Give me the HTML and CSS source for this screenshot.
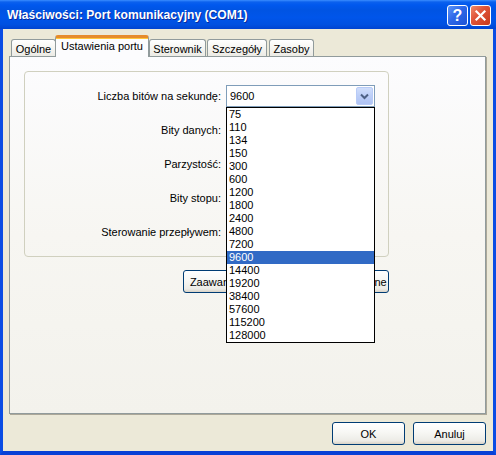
FILE: index.html
```html
<!DOCTYPE html>
<html lang="pl">
<head>
<meta charset="utf-8">
<title>Właściwości: Port komunikacyjny (COM1)</title>
<link rel="stylesheet" href="styles.css">
</head>
<body>
<div class="window">
  <div class="titlebar">
    <span class="title">Właściwości: Port komunikacyjny (COM1)</span>
    <div class="caption-buttons">
      <span class="cbtn help">?</span>
      <span class="cbtn close">
        <svg width="13" height="13" viewBox="0 0 13 13"><path d="M2.5 2.5 L10.5 10.5 M10.5 2.5 L2.5 10.5" stroke="#fff" stroke-width="2.2" stroke-linecap="square"/></svg>
      </span>
    </div>
  </div>
  <div class="client">
    <div class="tabs">
      <div class="tab t-ogolne">Ogólne</div>
      <div class="tab selected t-ustawienia">Ustawienia portu</div>
      <div class="tab t-sterownik">Sterownik</div>
      <div class="tab t-szczegoly">Szczegóły</div>
      <div class="tab t-zasoby">Zasoby</div>
    </div>
    <div class="panel">
      <div class="group">
        <div class="label">Liczba bitów na sekundę:</div>
        <div class="combo-cell">
          <div class="combo">
            <span class="combo-value">9600</span>
            <span class="drop-btn"><svg width="9" height="7" viewBox="0 0 9 7"><path d="M1 1.5 L4.5 5 L8 1.5" fill="none" stroke="#4D6185" stroke-width="2"/></svg></span>
          </div>
          <ul class="droplist">
            <li>75</li><li>110</li><li>134</li><li>150</li><li>300</li><li>600</li>
            <li>1200</li><li>1800</li><li>2400</li><li>4800</li><li>7200</li>
            <li class="hl">9600</li><li>14400</li><li>19200</li><li>38400</li>
            <li>57600</li><li>115200</li><li>128000</li>
          </ul>
        </div>
        <div class="label">Bity danych:</div>
        <div class="combo-cell"><div class="combo"><span class="combo-value"></span><span class="drop-btn"></span></div></div>
        <div class="label">Parzystość:</div>
        <div class="combo-cell"><div class="combo"><span class="combo-value"></span><span class="drop-btn"></span></div></div>
        <div class="label">Bity stopu:</div>
        <div class="combo-cell"><div class="combo"><span class="combo-value"></span><span class="drop-btn"></span></div></div>
        <div class="label">Sterowanie przepływem:</div>
        <div class="combo-cell"><div class="combo"><span class="combo-value"></span><span class="drop-btn"></span></div></div>
      </div>
      <div class="panel-buttons">
        <button class="btn wide">Zaawansowane...</button>
        <button class="btn wide">Przywróć domyślne</button>
      </div>
    </div>
    <div class="dialog-buttons">
      <button class="btn std">OK</button>
      <button class="btn std">Anuluj</button>
    </div>
  </div>
</div>
</body>
</html>
```
FILE: styles.css
```css
html, body {
  margin: 0;
  padding: 0;
  background: #ECE9D8;
}
* { box-sizing: border-box; }

.window {
  width: 496px;
  height: 455px;
  display: flex;
  flex-direction: column;
  font-family: "Liberation Sans", Arial, sans-serif;
  font-size: 11px;
  color: #000;
  background: #ECE9D8;
}

.titlebar {
  height: 29px;
  flex: none;
  display: flex;
  align-items: center;
  padding: 0 5px 0 7px;
  background: linear-gradient(180deg, #3A8DFF 0px, #0B61EE 2px, #0058EE 5px, #0054E3 10px, #0055EA 60%, #0050E0 85%, #0043D0 100%);
}
.title {
  flex: 1;
  color: #fff;
  font-weight: bold;
  font-size: 12.1px;
  text-shadow: 1px 1px 0 #0A2A9C;
  padding-top: 1px;
  white-space: nowrap;
}
.caption-buttons {
  display: flex;
  gap: 2px;
  margin-top: 2px;
}
.cbtn {
  width: 21px;
  height: 21px;
  border: 1px solid #fff;
  border-radius: 3px;
  display: flex;
  align-items: center;
  justify-content: center;
  color: #fff;
}
.help {
  background: linear-gradient(135deg, #5C94F8 0%, #2E68E8 45%, #1C52D6 100%);
  font-weight: bold;
  font-size: 16px;
  font-family: "Liberation Sans", Arial, sans-serif;
  line-height: 1;
}
.close {
  background: linear-gradient(135deg, #F08A6A 0%, #E0553A 40%, #C8391A 100%);
}

.client {
  flex: 1;
  display: flex;
  flex-direction: column;
  border-left: 3px solid #0A4CE4;
  border-right: 3px solid #0A4CE4;
  border-bottom: 4px solid #0840D6;
  padding: 6px 7px 0 6px;
}

.tabs {
  display: flex;
  align-items: flex-end;
  height: 21px;
  padding-left: 2px;
}
.tab {
  height: 17px;
  border: 1px solid #919B9C;
  border-bottom: none;
  border-radius: 3px 3px 0 0;
  background: linear-gradient(180deg, #FFFFFF 0%, #F6F5F1 50%, #ECEBE5 100%);
  display: flex;
  align-items: center;
  justify-content: center;
  white-space: nowrap;
  padding-top: 1px;
}
.tab.selected {
  height: 22px;
  margin-bottom: -1px;
  position: relative;
  z-index: 1;
  background: #FCFCFE;
  border-top: 3px solid #E68B2C;
  box-shadow: inset 0 1px 0 #FFC73C;
  padding-top: 0;
  padding-bottom: 3px;
}
.t-ogolne { width: 45px; }
.t-ustawienia { width: 94px; margin-left: -1px; }
.t-sterownik { width: 57px; }
.t-szczegoly { width: 60px; margin-left: 1px; }
.t-zasoby { width: 45px; margin-left: 2px; }

.panel {
  width: 477px;
  height: 358px;
  border: 1px solid #919B9C;
  background: linear-gradient(180deg, #FCFCFE 0%, #F7F6F2 50%, #F3F2EC 100%);
  box-shadow: 1px 1px 0 #ACA899;
  padding: 14px 0 0 14px;
}

.group {
  width: 365px;
  border: 1px solid #D0D0BF;
  border-radius: 4px;
  padding: 13px 0 13px 0;
  display: grid;
  grid-template-columns: 196px 149px;
  grid-auto-rows: 22px;
  column-gap: 5px;
  row-gap: 12px;
}
.label {
  display: flex;
  align-items: center;
  justify-content: flex-end;
  white-space: nowrap;
}
.combo-cell {
  position: relative;
}
.combo {
  height: 22px;
  border: 1px solid #7F9DB9;
  background: #fff;
  display: flex;
  align-items: center;
  padding: 1px;
}
.combo-value {
  flex: 1;
  padding-left: 2px;
}
.drop-btn {
  width: 17px;
  height: 18px;
  border: 1px solid #B8CBF7;
  border-radius: 2px;
  background: linear-gradient(180deg, #D0DEFB 0%, #BCCEF8 50%, #AFC3F4 100%);
  display: flex;
  align-items: center;
  justify-content: center;
}

.droplist {
  position: absolute;
  top: 100%;
  left: 0;
  width: 149px;
  margin: 0;
  padding: 0;
  list-style: none;
  border: 1px solid #000;
  background: #fff;
  z-index: 5;
}
.droplist li {
  height: 13px;
  line-height: 13px;
  padding-left: 2px;
}
.droplist li.hl {
  background: #316AC5;
  color: #fff;
}

.panel-buttons {
  width: 365px;
  margin-top: 13px;
  display: flex;
  justify-content: flex-end;
  gap: 6px;
}

.btn {
  height: 23px;
  border: 1px solid #003C74;
  border-radius: 3px;
  background: linear-gradient(180deg, #FFFFFF 0%, #F7F7F4 45%, #ECEBE6 85%, #D8D2C6 100%);
  font-family: "Liberation Sans", Arial, sans-serif;
  font-size: 11px;
  color: #000;
  padding: 0;
  white-space: nowrap;
}
.btn.wide { width: 100px; }
.btn.std { width: 73px; }

.dialog-buttons {
  margin-top: 8px;
  display: flex;
  justify-content: flex-end;
  gap: 8px;
}
```
